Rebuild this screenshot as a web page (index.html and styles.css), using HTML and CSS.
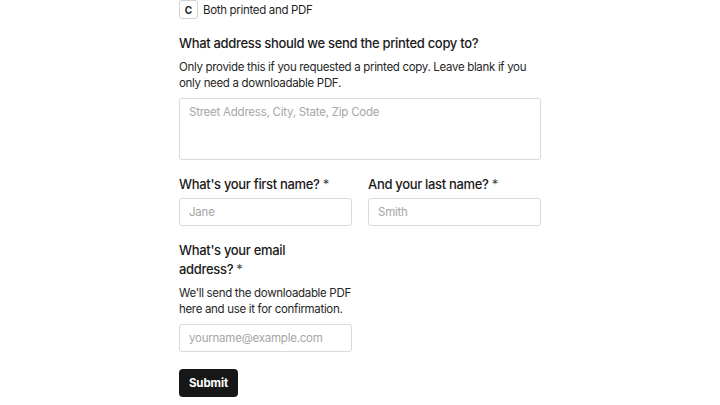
FILE: index.html
```html
<!DOCTYPE html>
<html lang="en">
<head>
    <meta charset="UTF-8">
    <meta name="viewport" content="width=device-width, initial-scale=1.0">
    <title>Pedido</title>
    <link rel="stylesheet" href="styles.css">
</head>

<body>
    <form class="formulario" action="">
        <div class="opcao">
            <span class="letra">C</span>
            <span>Both printed and PDF</span>
        </div>

        <div class="grupo">
            <label class="titulo">What address should we send the printed copy to?</label>
            <p class="ajuda">Only provide this if you requested a printed copy. Leave blank if you only need a downloadable PDF.</p>
            <textarea class="campo area" placeholder="Street Address, City, State, Zip Code"></textarea>
        </div>

        <div class="linha">
            <div class="grupo">
                <label class="titulo">What's your first name?&nbsp;<span class="req">*</span></label>
                <input class="campo" type="text" placeholder="Jane">
            </div>
            <div class="grupo">
                <label class="titulo">And your last name?&nbsp;<span class="req">*</span></label>
                <input class="campo" type="text" placeholder="Smith">
            </div>
        </div>

        <div class="linha">
            <div class="grupo">
                <label class="titulo estreito">What's your email address?&nbsp;<span class="req">*</span></label>
                <p class="ajuda">We'll send the downloadable PDF here and use it for confirmation.</p>
                <input class="campo" type="email" placeholder="yourname@example.com">
            </div>
        </div>

        <button class="enviar" type="submit">Submit</button>
    </form>
</body>

</html>
```

FILE: styles.css
```css
body {
    margin: 0;
    background-color: #ffffff;
    color: #1a1a1a;
    font-family: Inter, "Liberation Sans", sans-serif;
    letter-spacing: -0.02em;
}

.formulario {
    width: 362px;
    margin: 0 auto;
}

.opcao {
    display: flex;
    align-items: center;
    gap: 5px;
    font-size: 11.5px;
    color: #1f1f1f;
    margin-bottom: 15px;
}

.letra {
    width: 17px;
    height: 17px;
    border: 1px solid #d2d2d2;
    border-radius: 3px;
    display: flex;
    align-items: center;
    justify-content: center;
    font-size: 10px;
    font-weight: 700;
    letter-spacing: 0;
}

.grupo {
    display: flex;
    flex-direction: column;
    margin-bottom: 15px;
}

.titulo {
    font-size: 13px;
    font-weight: 500;
    line-height: 19px;
    margin-bottom: 4px;
}

/* o rótulo do e-mail quebra em duas linhas */
.estreito {
    max-width: 150px;
}

.req {
    font-size: 13px;
    font-weight: 400;
    color: #444;
}

.ajuda {
    margin: 2px 0 7px;
    font-size: 11.5px;
    line-height: 16px;
    color: #262626;
}

.linha {
    display: grid;
    grid-template-columns: minmax(0, 1fr) minmax(0, 1fr);
    column-gap: 16px;
}

.campo {
    box-sizing: border-box;
    width: 100%;
    height: 28px;
    padding: 0 9px;
    border: 1px solid #d9d9d9;
    border-radius: 3px;
    font-family: inherit;
    font-size: 11.5px;
    letter-spacing: -0.02em;
    color: #222;
    outline: none;
}

.campo::placeholder {
    color: #a6a6a6;
}

.area {
    height: 62px;
    padding: 6px 9px;
    resize: none;
}

.enviar {
    margin-top: 2px;
    width: 59px;
    height: 28px;
    border: none;
    border-radius: 4px;
    background-color: #171717;
    color: #ffffff;
    font-family: inherit;
    font-size: 11.5px;
    font-weight: 700;
    letter-spacing: -0.01em;
}
```
